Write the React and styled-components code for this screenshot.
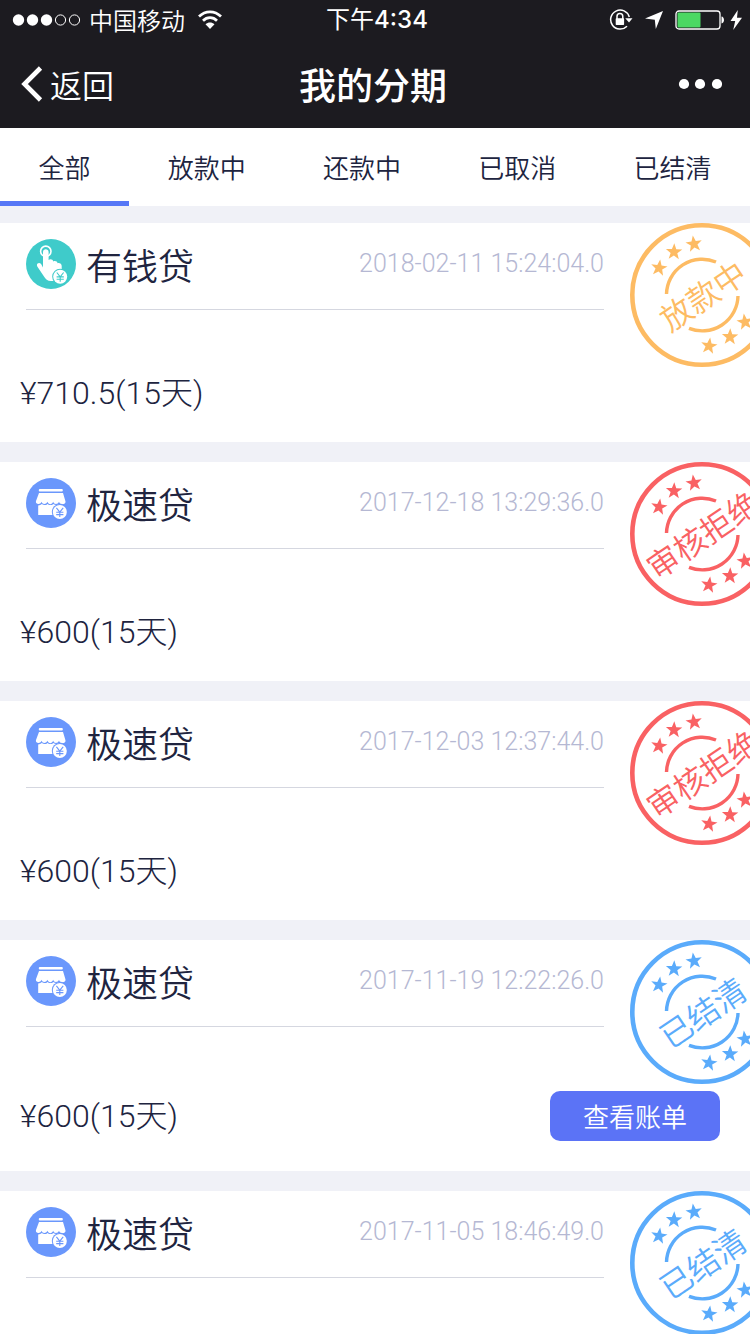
import React, { useState } from 'react';
import styled, { createGlobalStyle } from 'styled-components';

const GlobalStyle = createGlobalStyle`
  * { box-sizing: border-box; }
  body {
    margin: 0;
    background: #f0f1f7;
    color: #20243f;
    font-family: "Noto Sans CJK SC", sans-serif;
    font-weight: 350;
  }
  button {
    margin: 0;
    padding: 0;
    border: 0;
    background: none;
    color: inherit;
    font: inherit;
    cursor: pointer;
  }
  h1, h2, p { margin: 0; font-weight: inherit; }
  svg { display: block; flex: none; }
`;

const Screen = styled.div`
  display: flex;
  flex-direction: column;
  height: 100vh;
`;

const TopBar = styled.header`
  flex: none;
  background: #1c1b20;
  color: #fff;
`;

const StatusBar = styled.div`
  display: grid;
  grid-template-columns: 1fr auto 1fr;
  align-items: center;
  height: 40px;
  padding: 0 8px 0 12px;
  font-size: 24px;
  line-height: 40px;
`;

const StatusGroup = styled.div`
  display: flex;
  align-items: center;
  justify-content: ${(p) => (p.$end ? 'flex-end' : 'flex-start')};
  gap: ${(p) => p.$gap}px;
`;

const Clock = styled.time`
  font-family: Inter, "Noto Sans CJK SC", sans-serif;
  font-weight: 500;
`;

const ClockPeriod = styled.span`
  font-weight: 400;
`;

const NavBar = styled.nav`
  display: grid;
  grid-template-columns: 1fr auto 1fr;
  align-items: center;
  height: 88px;
  padding: 0 24px 0 20px;
`;

const BackButton = styled.button`
  justify-self: start;
  display: flex;
  align-items: center;
  gap: 6px;
  font-size: 32px;
  line-height: 48px;
`;

const NavTitle = styled.h1`
  font-size: 37px;
  line-height: 56px;
  font-weight: 500;
`;

const MoreButton = styled.button`
  justify-self: end;
  padding-right: 4px;
`;

const Tabs = styled.div`
  flex: none;
  display: flex;
  height: 78px;
  margin-bottom: 17px;
  background: #fff;
`;

const Tab = styled.button`
  flex: 1 1 auto;
  padding-top: 5px;
  border-bottom: 5px solid ${(p) => (p.$active ? '#5677f6' : 'transparent')};
  font-size: 26px;
  line-height: 40px;
`;

const LoanList = styled.main`
  flex: 1;
  min-height: 0;
  display: flex;
  flex-direction: column;
  gap: 20px;
  overflow-y: auto;
  scrollbar-width: none;
`;

const Card = styled.article`
  position: relative;
  flex: none;
  min-height: 219px;
  overflow: hidden;
  background: #fff;
`;

const CardHeader = styled.div`
  display: flex;
  align-items: center;
  height: 87px;
  margin: 0 146px 0 26px;
  padding-bottom: 4px;
  border-bottom: 1px solid #d5d7e0;
`;

const LoanName = styled.h2`
  flex: 1;
  margin-left: 10px;
  font-size: 36px;
  line-height: 48px;
`;

const LoanDate = styled.time`
  color: #b5b8d3;
  font-family: Roboto, "Noto Sans CJK SC", sans-serif;
  font-size: 25px;
  font-weight: 300;
  line-height: 32px;
`;

const CardBody = styled.div`
  display: flex;
  align-items: center;
  justify-content: space-between;
  padding: 64px 30px 30px 20px;
`;

const Amount = styled.p`
  font-family: Roboto, "Noto Sans CJK SC", sans-serif;
  font-size: 32px;
  font-weight: 300;
  line-height: 38px;
`;

const BillButton = styled.button`
  width: 170px;
  height: 50px;
  border-radius: 10px;
  background: #5b73f6;
  color: #fff;
  font-size: 26px;
  line-height: 50px;
`;

const StampMark = styled.svg`
  position: absolute;
  top: 0;
  right: -24px;
  font-size: 32px;
`;

const STAMPS = {
  lending: { text: '放款中', color: '#fdbb63' },
  rejected: { text: '审核拒绝', color: '#f96163' },
  settled: { text: '已结清', color: '#5aabfb' },
};

const STARS = [
  [29, 45, 8],
  [44, 29, 2],
  [64, 21, -8],
  [79, 123, 8],
  [100, 114, 2],
  [115, 99, -8],
];

const STAR_POINTS = '0,-8 2,-2.6 7.6,-2.5 3.1,1 4.7,6.5 0,3.3 -4.7,6.5 -3.1,1 -7.6,-2.5 -2,-2.6';

function Stamp({ status }) {
  const { text, color } = STAMPS[status];
  return (
    <StampMark width="144" height="144" viewBox="0 0 144 144" fill={color}>
      <g fill="none" stroke={color}>
        <circle cx="72" cy="72" r="69.7" strokeWidth="4.6" />
        <path d="M36.5 71A35.7 35.7 0 0 1 86 39" strokeWidth="3.4" />
        <path d="M108 73A35.7 35.7 0 0 1 59 105.3" strokeWidth="3.4" />
      </g>
      {STARS.map(([x, y, turn]) => (
        <polygon key={x} points={STAR_POINTS} transform={`translate(${x} ${y}) rotate(${turn}) scale(1.08)`} />
      ))}
      <text x="0" y="12" textAnchor="middle" transform="translate(73 73) rotate(-34)">
        {text}
      </text>
    </StampMark>
  );
}

function CoinBadge({ x, y, color }) {
  return (
    <g transform={`translate(${x} ${y})`}>
      <circle r="8" fill={color} />
      <circle r="7" fill="#fff" />
      <path d="M-3.4-4.2L0 .2l3.4-4.4M0 .2V5M-3.6.2h7.2M-3.6 2.6h7.2" fill="none" stroke={color} strokeWidth="1.1" />
    </g>
  );
}

function TapIcon() {
  return (
    <svg width="50" height="50" viewBox="0 0 50 50" aria-hidden="true">
      <circle cx="25" cy="25" r="25" fill="#3fcbca" />
      <circle cx="19.8" cy="12.3" r="5.2" fill="none" stroke="#fff" strokeWidth="1.6" />
      <path
        d="M17 13c0-3.700 5.600-3.700 5.600 0v8c1.700-1.500 4.400-.5 4.700 1.500 1.700-1 4-.2 4.300 1.700 2-.6 4.100.7 4.100 2.800V35c0 3-2 7-5 7H25c-3.500 0-5.500-2-7-4.600l-6.700-9.900c-1.500-3 1.900-4.700 3.800-2.500L17 28.500z"
        fill="#fff"
      />
      <CoinBadge x={34.2} y={37.7} color="#3fcbca" />
    </svg>
  );
}

function ShopIcon() {
  return (
    <svg width="50" height="50" viewBox="0 0 50 50" aria-hidden="true">
      <circle cx="25" cy="25" r="25" fill="#6a97fc" />
      <rect x="12.8" y="11" width="24" height="2.5" rx="1" fill="#fff" />
      <path
        d="M13 15h24l2.500 8.500c.3 2-2 3-3.500 2.600-1.600 0-2.500-1-3-2.300-1.300 3-5 3-5.800 0-1.200 3.300-4.700 3.300-5.800 0-1.300 3-5 3-5.800 0-.8 1.700-2.200 2.500-3.600 2.200-1.700-.3-2.400-1.500-2-3z"
        fill="#fff"
      />
      <path d="M12.200 27.400c1.500 0 2.700-.5 3.600-1.400 1.700 1.500 4 1.500 5.800-.1 1.700 1.600 4 1.600 5.800 0 1.500 1.400 3.700 1.500 5.500.3 1 .7 2 1.100 3.300 1.100V37h-24z" fill="#fff" />
      <CoinBadge x={33.8} y={34} color="#6a97fc" />
    </svg>
  );
}

const SignalDots = () => (
  <svg width="68" height="12" viewBox="0 0 68 12" aria-hidden="true">
    {[6.5, 20.5, 34.5].map((x) => (
      <circle key={x} cx={x} cy="6" r="5.700" fill="#fff" />
    ))}
    {[48.5, 62.5].map((x) => (
      <circle key={x} cx={x} cy="6" r="5.100" fill="none" stroke="#fff" />
    ))}
  </svg>
);

const WifiIcon = () => (
  <svg width="26" height="20" viewBox="0 0 26 20" aria-hidden="true">
    <g fill="none" stroke="#fff" strokeWidth="2.700">
      <path d="M2 6.500C8.300.2 17.700.2 24 6.500" />
      <path d="M6 10.700c4-4 10-4 14 0" />
    </g>
    <path d="M8.500 14.200c2.700-2.300 6.300-2.300 9 0L13 19z" fill="#fff" />
  </svg>
);

const RotationLockIcon = () => (
  <svg width="24" height="22" viewBox="0 0 24 22" aria-hidden="true">
    <path d="M20.300 8A9.500 9.500 0 1 0 18 17.200" fill="none" stroke="#fff" strokeWidth="1.500" />
    <path d="M16.300 9.300h7.200L20 13.500z" fill="#fff" />
    <path d="M8 10V7.500a2.900 2.900 0 0 1 5.800 0V10" fill="none" stroke="#fff" strokeWidth="1.500" />
    <rect x="6.700" y="9.300" width="8.400" height="6.700" rx=".7" fill="#fff" />
  </svg>
);

const LocationIcon = () => (
  <svg width="18" height="18" viewBox="0 0 18 18" aria-hidden="true">
    <path d="M18 0L10.800 18 9.800 8.800 0 7.500z" fill="#fff" />
  </svg>
);

const BatteryIcon = () => (
  <svg width="50" height="20" viewBox="0 0 50 20" aria-hidden="true">
    <rect x="1" y="1" width="44" height="18" rx="3" fill="none" stroke="#fff" strokeWidth="1.300" />
    <rect x="2.500" y="2.500" width="23" height="15" rx="1" fill="#4bd863" />
    <path d="M46.500 6.500c3.300.3 3.300 6.700 0 7z" fill="#fff" />
  </svg>
);

const BoltIcon = () => (
  <svg width="12" height="20" viewBox="0 0 12 20" aria-hidden="true">
    <path d="M7.800 0L.5 11h4.700L3.200 20 12 7.800H7z" fill="#fff" />
  </svg>
);

const BackChevron = () => (
  <svg width="24" height="36" viewBox="0 0 24 36" aria-hidden="true">
    <path d="M20.500 2L4.500 18 20.500 34" fill="none" stroke="#fff" strokeWidth="4.600" />
  </svg>
);

const MoreDots = () => (
  <svg width="44" height="12" viewBox="0 0 44 12" aria-hidden="true">
    {[6, 22, 39].map((x) => (
      <circle key={x} cx={x} cy="6" r="5.100" fill="#fff" />
    ))}
  </svg>
);

const TABS = ['全部', '放款中', '还款中', '已取消', '已结清'];

const LOANS = [
  { name: '有钱贷', Icon: TapIcon, date: '2018-02-11 15:24:04.0', amount: '¥710.5(15天)', status: 'lending' },
  { name: '极速贷', Icon: ShopIcon, date: '2017-12-18 13:29:36.0', amount: '¥600(15天)', status: 'rejected' },
  { name: '极速贷', Icon: ShopIcon, date: '2017-12-03 12:37:44.0', amount: '¥600(15天)', status: 'rejected' },
  { name: '极速贷', Icon: ShopIcon, date: '2017-11-19 12:22:26.0', amount: '¥600(15天)', status: 'settled', bill: true },
  { name: '极速贷', Icon: ShopIcon, date: '2017-11-05 18:46:49.0', status: 'settled' },
];

function LoanCard({ name, Icon, date, amount, status, bill }) {
  return (
    <Card>
      <CardHeader>
        <Icon />
        <LoanName>{name}</LoanName>
        <LoanDate>{date}</LoanDate>
      </CardHeader>
      {amount && (
        <CardBody>
          <Amount>{amount}</Amount>
          {bill && <BillButton type="button">查看账单</BillButton>}
        </CardBody>
      )}
      <Stamp status={status} />
    </Card>
  );
}

export default function App() {
  const [active, setActive] = useState(0);
  return (
    <Screen lang="zh-CN">
      <GlobalStyle />
      <TopBar>
        <StatusBar>
          <StatusGroup $gap={9}>
            <SignalDots />
            <StatusGroup $gap={12}>
              <span>中国移动</span>
              <WifiIcon />
            </StatusGroup>
          </StatusGroup>
          <Clock>
            <ClockPeriod>下午</ClockPeriod>4:34
          </Clock>
          <StatusGroup $end $gap={12}>
            <RotationLockIcon />
            <LocationIcon />
            <StatusGroup $gap={5}>
              <BatteryIcon />
              <BoltIcon />
            </StatusGroup>
          </StatusGroup>
        </StatusBar>
        <NavBar>
          <BackButton type="button">
            <BackChevron />
            返回
          </BackButton>
          <NavTitle>我的分期</NavTitle>
          <MoreButton type="button" aria-label="更多">
            <MoreDots />
          </MoreButton>
        </NavBar>
      </TopBar>
      <Tabs>
        {TABS.map((label, i) => (
          <Tab key={label} type="button" aria-pressed={i === active} $active={i === active} onClick={() => setActive(i)}>
            {label}
          </Tab>
        ))}
      </Tabs>
      <LoanList>
        {LOANS.map((loan) => (
          <LoanCard key={loan.date} {...loan} />
        ))}
      </LoanList>
    </Screen>
  );
}
